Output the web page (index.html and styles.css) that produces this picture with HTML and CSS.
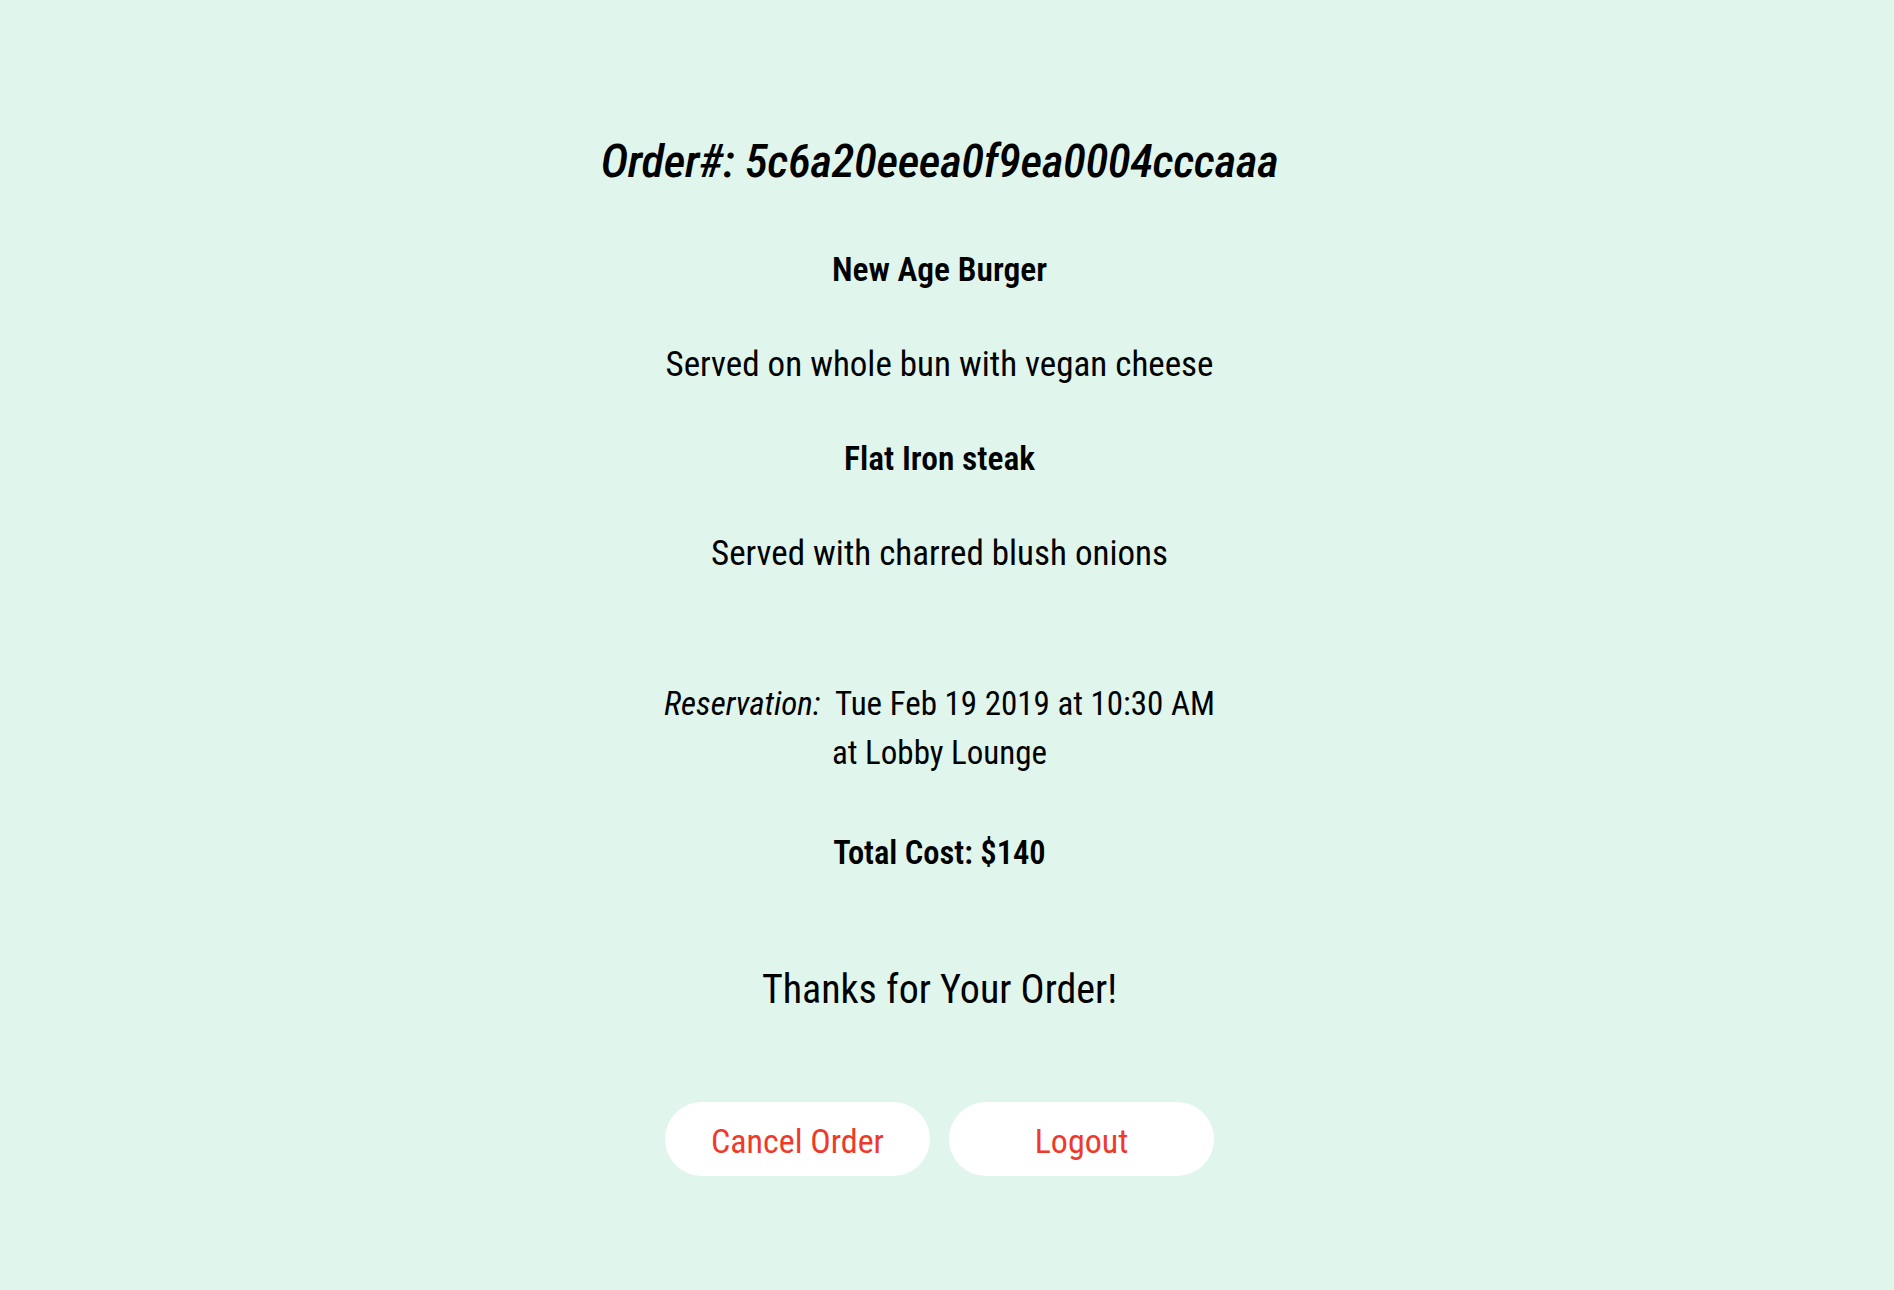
FILE: index.html
```html
<!DOCTYPE html>
<html lang="en">
<head>
<meta charset="utf-8">
<title>Order Confirmation</title>
<link rel="stylesheet" href="styles.css">
</head>
<body>
<main class="order">
  <h1 class="order-title">Order#: 5c6a20eeea0f9ea0004cccaaa</h1>
  <section class="dishes">
    <p class="dish-name">New Age Burger</p>
    <p class="dish-desc">Served on whole bun with vegan cheese</p>
    <p class="dish-name">Flat Iron steak</p>
    <p class="dish-desc">Served with charred blush onions</p>
  </section>
  <p class="reservation"><em class="res-label">Reservation:</em>&nbsp; Tue Feb 19 2019 at 10:30 AM<br>at Lobby Lounge</p>
  <p class="total">Total Cost: $140</p>
  <p class="thanks">Thanks for Your Order!</p>
  <div class="actions">
    <button class="btn">Cancel Order</button>
    <button class="btn">Logout</button>
  </div>
</main>
</body>
</html>
```
FILE: styles.css
```css
html, body {
  margin: 0;
  padding: 0;
  background: #e0f5ec;
}
body {
  font-family: Roboto, "DejaVu Sans", sans-serif;
  font-stretch: 75%;
  color: #000;
  min-height: 1290px;
}
.order {
  display: flex;
  flex-direction: column;
  align-items: center;
  text-align: center;
  padding-top: 129px;
  padding-right: 15px;
}
.order p, .order h1 { margin: 0; }
.order-title {
  font-size: 47px;
  line-height: 64px;
  font-style: italic;
  font-weight: 500;
  letter-spacing: -0.4px;
}
.dishes {
  display: flex;
  flex-direction: column;
  align-items: center;
  gap: 54.5px;
  margin-top: 57px;
}
.dish-name {
  font-size: 33.5px;
  line-height: 40px;
  font-weight: 600;
}
.dish-desc {
  font-size: 35px;
  line-height: 40px;
  font-weight: 400;
}
.reservation {
  font-size: 33px;
  line-height: 49px;
  margin-top: 105px !important;
}
.res-label { font-style: italic; }
.total {
  font-size: 32.5px;
  line-height: 40px;
  font-weight: 600;
  margin-top: 56px !important;
}
.thanks {
  font-size: 40px;
  line-height: 50px;
  margin-top: 92px !important;
}
.actions {
  display: flex;
  gap: 19px;
  margin-top: 87px;
}
.btn {
  width: 265px;
  height: 74px;
  border: none;
  border-radius: 37px;
  background: #fff;
  color: #ef3a2b;
  font-family: inherit;
  font-stretch: inherit;
  font-size: 34px;
  line-height: 70px;
  padding: 4px 0 0;
  cursor: pointer;
}
```
